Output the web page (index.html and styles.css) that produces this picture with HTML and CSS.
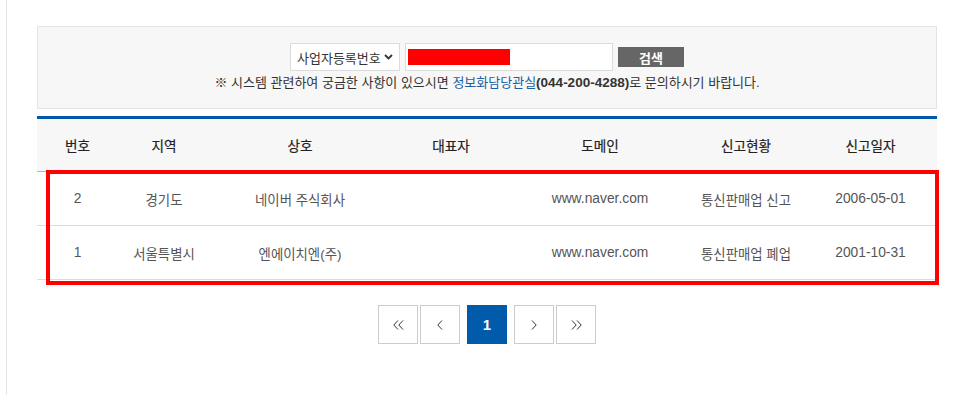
FILE: index.html
```html
<!DOCTYPE html>
<html lang="ko">
<head>
<meta charset="utf-8">
<link rel="stylesheet" href="styles.css">
</head>
<body>
<div class="page">
  <div class="content">
    <div class="search-box">
      <div class="search-row">
        <div class="select">
          <span>사업자등록번호</span>
          <svg class="chev" width="9" height="6" viewBox="0 0 9 6"><polyline points="1,1 4.5,4.5 8,1" fill="none" stroke="#333" stroke-width="1.8"/></svg>
        </div>
        <div class="input"><span class="redact"></span></div>
        <button class="btn">검색</button>
      </div>
      <p class="notice">※ 시스템 관련하여 궁금한 사항이 있으시면 <a class="link">정보화담당관실</a><b class="tel">(044-200-4288)</b>로 문의하시기 바랍니다.</p>
    </div>

    <div class="table-wrap">
      <table class="list">
        <colgroup>
          <col class="c1"><col class="c2"><col class="c3"><col class="c4"><col class="c5"><col class="c6"><col class="c7">
        </colgroup>
        <thead>
          <tr><th>번호</th><th>지역</th><th>상호</th><th>대표자</th><th>도메인</th><th>신고현황</th><th>신고일자</th></tr>
        </thead>
        <tbody>
          <tr><td class="lat">2</td><td>경기도</td><td>네이버 주식회사</td><td></td><td class="lat">www.naver.com</td><td>통신판매업 신고</td><td class="lat">2006-05-01</td></tr>
          <tr><td class="lat">1</td><td>서울특별시</td><td>엔에이치엔(주)</td><td></td><td class="lat">www.naver.com</td><td>통신판매업 폐업</td><td class="lat">2001-10-31</td></tr>
        </tbody>
      </table>
      <div class="highlight"></div>
    </div>

    <div class="paging">
      <div class="group">
        <a class="pg"><svg width="11" height="10" viewBox="0 0 11 10"><polyline points="5,0.5 0.8,5 5,9.5" fill="none" stroke="#333" stroke-width="1"/><polyline points="10,0.5 5.8,5 10,9.5" fill="none" stroke="#333" stroke-width="1"/></svg></a>
        <a class="pg"><svg width="6" height="10" viewBox="0 0 6 10"><polyline points="5,0.5 0.8,5 5,9.5" fill="none" stroke="#333" stroke-width="1"/></svg></a>
      </div>
      <a class="pg active">1</a>
      <div class="group">
        <a class="pg"><svg width="6" height="10" viewBox="0 0 6 10"><polyline points="1,0.5 5.2,5 1,9.5" fill="none" stroke="#333" stroke-width="1"/></svg></a>
        <a class="pg"><svg width="11" height="10" viewBox="0 0 11 10"><polyline points="1,0.5 5.2,5 1,9.5" fill="none" stroke="#333" stroke-width="1"/><polyline points="6,0.5 10.2,5 6,9.5" fill="none" stroke="#333" stroke-width="1"/></svg></a>
      </div>
    </div>
  </div>
</div>
</body>
</html>
```

FILE: styles.css
```css
* { box-sizing: border-box; }
html, body { margin: 0; padding: 0; background: #fff; }
body {
  font-family: "Liberation Sans", "Noto Sans CJK KR", sans-serif;
  color: #333;
  font-size: 13px;
}
.page {
  margin-left: 6px;
  border-left: 1px solid #e6e6e6;
  min-height: 395px;
  padding: 26px 0 0 30px;
}
.content { width: 900px; }

.search-box {
  background: #f7f7f7;
  border: 1px solid #e4e4e4;
  height: 83px;
  padding-top: 16px;
}
.search-row {
  display: flex;
  justify-content: center;
  align-items: center;
  gap: 5px;
}
.select {
  width: 110px;
  height: 28px;
  background: #fff;
  border: 1px solid #dcdcdc;
  display: flex;
  align-items: center;
  padding-left: 6px;
  font-size: 13px;
  color: #333;
}
.select .chev { margin-left: 3px; }
.input {
  width: 208px;
  height: 28px;
  background: #fff;
  border: 1px solid #dcdcdc;
  padding: 5px 2px;
}
.redact { display: block; width: 102px; height: 16px; background: #ff0000; }
.btn {
  width: 66px;
  height: 20px;
  border: 0;
  background: #666;
  color: #fff;
  font-family: inherit;
  font-size: 13px;
  font-weight: bold;
  padding: 0;
}
.notice {
  margin: 3px 0 0;
  text-align: center;
  font-size: 13px;
  line-height: 18px;
  color: #333;
}
.link { color: #1b5fa5; }
.tel { font-size: 13.5px; color: #333; }

.table-wrap {
  position: relative;
  margin-top: 7px;
}
.list {
  width: 900px;
  border-collapse: collapse;
  table-layout: fixed;
  border-top: 3px solid #0059a9;
}
.c1 { width: 81px; } .c2 { width: 92px; } .c3 { width: 180px; } .c4 { width: 122px; }
.c5 { width: 176px; } .c6 { width: 116px; } .c7 { width: 133px; }
.list th {
  background: #f7f7f7;
  height: 54px;
  font-weight: normal;
  font-size: 13.6px;
  color: #222;
  border-bottom: 1px solid #b5b5b5;
  padding: 0;
  -webkit-text-stroke: 0.2px #222;
}
.list td {
  height: 54px;
  text-align: center;
  font-size: 13.4px;
  color: #555;
  border-bottom: 1px solid #dcdcdc;
  padding: 0;
}
.list td.lat { font-size: 13.8px; }
.highlight {
  position: absolute;
  left: 9px;
  top: 54px;
  width: 893px;
  height: 115px;
  border: 4px solid #ff0000;
}

.paging {
  margin-top: 25px;
  display: flex;
  justify-content: center;
  gap: 7px;
}
.group { display: flex; gap: 2px; }
.pg {
  width: 40px;
  height: 39px;
  border: 1px solid #cccccc;
  display: flex;
  align-items: center;
  justify-content: center;
  background: #fff;
}
.pg.active {
  background: #005bab;
  border-color: #005bab;
  color: #fff;
  font-weight: bold;
  font-size: 15px;
}
```
